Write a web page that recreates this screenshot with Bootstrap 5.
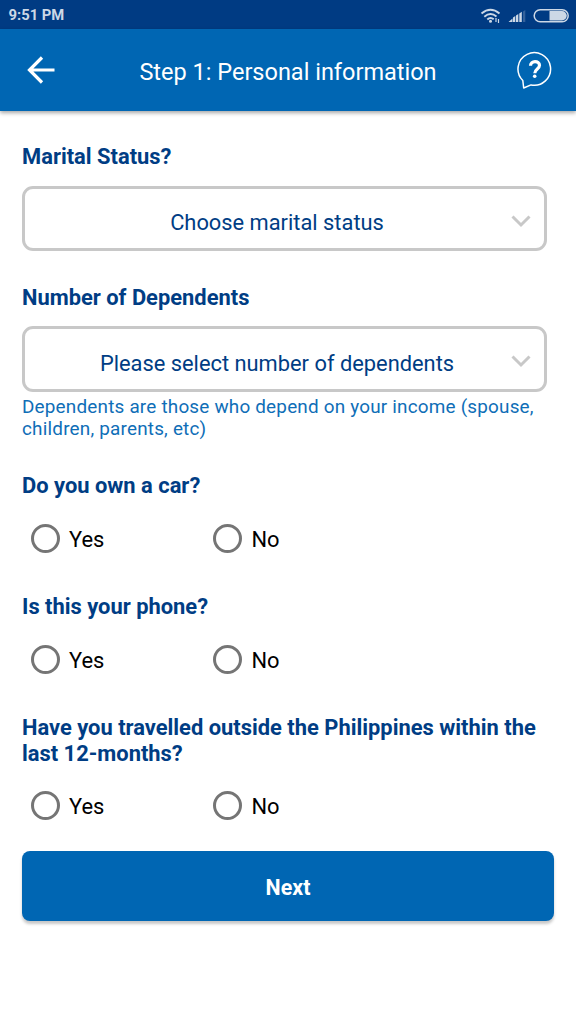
<!DOCTYPE html>
<html lang="en">
<head>
<meta charset="utf-8">
<meta name="viewport" content="width=device-width, initial-scale=1">
<title>Step 1: Personal information</title>
<link href="https://cdn.jsdelivr.net/npm/bootstrap@5.3.0/dist/css/bootstrap.min.css" rel="stylesheet">
<style>
body{font-family:Roboto,sans-serif;background:#fff;color:#000;min-height:100vh}
.statusbar{height:29px;background:#003b83;color:#ccd8e6;font-size:14.8px;font-weight:700;padding:1px 6px 0 8.5px}
.appbar{height:82px;background:#0066b3;color:#fff;padding:0 23px 0 24px;box-shadow:0 2px 4px rgba(0,0,0,.35)}
.appbar h1{font-size:23.5px;font-weight:400;line-height:28px;padding:4px 0 0 1px}
.screen-form{padding:33px 22px 20px}
.q-label{color:#003d84;font-weight:700;font-size:21.9px;line-height:25.5px;margin:0;display:block}
.picker{width:525px;height:65.5px;margin-top:16px;border:3px solid #c8c8c8;border-radius:11px;background:#fff;color:#003d84;font-size:21.85px;line-height:26px;padding:10px 13px 0 18px}
.picker svg{margin-top:-5px}
.hint{color:#0f6eb7;font-size:18.9px;line-height:22px;margin:4px 0 0;letter-spacing:.2px}
.choices{height:36px;margin-top:21.5px;padding-left:8.5px}
.choice{width:182.5px;font-size:21.9px;line-height:26px}
.choice .form-check-input{width:29px;height:29px;margin:0 9.5px 0 0;border:3px solid #757575;background:#fff;flex:none}
.choice label{padding-top:3px}
.next-btn.btn{height:70.5px;margin-top:27px;padding-top:10px;background:#0066b3;border:0;border-radius:8px;color:#fff;font-weight:700;font-size:21.4px;box-shadow:0 3px 3px rgba(0,0,0,.22)}
.next-btn.btn:hover{background:#005a9f;color:#fff}
.gap-q{margin-top:33.5px}
.gap-hint{margin-top:33.5px}
.gap-choices{margin-top:38px}
</style>
</head>
<body>
<div class="statusbar d-flex align-items-center justify-content-between">
  <span>9:51 PM</span>
  <svg width="90" height="29" viewBox="480 0 90 29" fill="none" stroke="#ccd8e6" aria-hidden="true">
    <g stroke-width="1.9"><path d="M481.500 12.500Q490.500 5 499.500 12.500M484.300 15.700Q490.500 10.500 496.500 15.500M487.300 18.500Q490.500 15.500 493.700 18.300"/></g>
    <circle cx="490.500" cy="20.300" r="1.500" fill="#ccd8e6" stroke="none"/>
    <path d="M496 17v4M498.500 18v4" stroke-width="1.200"/>
    <path d="M508.500 21l4-3.500V21zM513 21v-4.500l2.300-1.500v6zM516 21v-6.500l2.300-1.500v8zM519.300 21v-8.500l2.500-1.700V21z" fill="#ccd8e6" stroke="none"/>
    <path d="M523 21V10.500l2.300-1.500v12z" fill="#35629b" stroke="none"/>
    <rect x="534.200" y="8.700" width="34" height="12" rx="6" stroke-width="1.500"/>
    <path d="M549.500 10h12.500a4.700 4.700 0 0 1 0 9.500h-12.500z" fill="#ccd8e6" stroke="none"/>
  </svg>
</div>
<header class="appbar d-flex align-items-center justify-content-between position-relative">
  <svg width="34" height="34" viewBox="0 0 34 34" fill="none" stroke="#fff" stroke-width="3.200" role="img" aria-label="Back"><path d="M30.500 17H5M18 4.500L5.500 17 18 29.500"/></svg>
  <h1 class="m-0">Step 1: Personal information</h1>
  <svg width="36" height="40" viewBox="517 50 36 40" fill="none" stroke="#fff" role="img" aria-label="Help">
    <path d="M523.700 88L522.800 80.500A16.300 16.300 0 1 1 531 84.900Z" stroke-width="1.500" stroke-linejoin="round"/>
    <path d="M530.500 65.800C530.500 60.200 539.500 60.200 539.500 65.300C539.500 69.100 534.800 68.900 534.800 73.300" stroke-width="3.200"/>
    <circle cx="534.700" cy="76.300" r="1.800" fill="#fff" stroke="none"/>
  </svg>
</header>
<form class="screen-form">
  <label class="q-label">Marital Status?</label>
  <button type="button" class="picker d-flex align-items-center">
    <span class="flex-grow-1 text-center">Choose marital status</span>
    <svg width="20" height="14" viewBox="0 0 20 14" fill="none" stroke="#c8c8c8" stroke-width="3"><path d="M1.500 2.500L10 11l8.500-8.500"/></svg>
  </button>
  <label class="q-label gap-q">Number of Dependents</label>
  <button type="button" class="picker d-flex align-items-center">
    <span class="flex-grow-1 text-center">Please select number of dependents</span>
    <svg width="20" height="14" viewBox="0 0 20 14" fill="none" stroke="#c8c8c8" stroke-width="3"><path d="M1.500 2.500L10 11l8.500-8.500"/></svg>
  </button>
  <p class="hint">Dependents are those who depend on your income (spouse,<br>children, parents, etc)</p>

  <div class="q-label gap-hint">Do you own a car?</div>
  <div class="choices d-flex align-items-center">
    <div class="choice d-flex align-items-center"><input class="form-check-input" type="radio" name="car" id="carYes"><label for="carYes">Yes</label></div>
    <div class="choice d-flex align-items-center"><input class="form-check-input" type="radio" name="car" id="carNo"><label for="carNo">No</label></div>
  </div>
  <div class="q-label gap-choices">Is this your phone?</div>
  <div class="choices d-flex align-items-center">
    <div class="choice d-flex align-items-center"><input class="form-check-input" type="radio" name="phone" id="phoneYes"><label for="phoneYes">Yes</label></div>
    <div class="choice d-flex align-items-center"><input class="form-check-input" type="radio" name="phone" id="phoneNo"><label for="phoneNo">No</label></div>
  </div>
  <div class="q-label gap-choices">Have you travelled outside the Philippines within the<br>last 12-months?</div>
  <div class="choices d-flex align-items-center">
    <div class="choice d-flex align-items-center"><input class="form-check-input" type="radio" name="travel" id="travelYes"><label for="travelYes">Yes</label></div>
    <div class="choice d-flex align-items-center"><input class="form-check-input" type="radio" name="travel" id="travelNo"><label for="travelNo">No</label></div>
  </div>
  <button type="button" class="btn next-btn w-100">Next</button>
</form>
<script src="https://cdn.jsdelivr.net/npm/bootstrap@5.3.0/dist/js/bootstrap.bundle.min.js"></script>
</body>
</html>
